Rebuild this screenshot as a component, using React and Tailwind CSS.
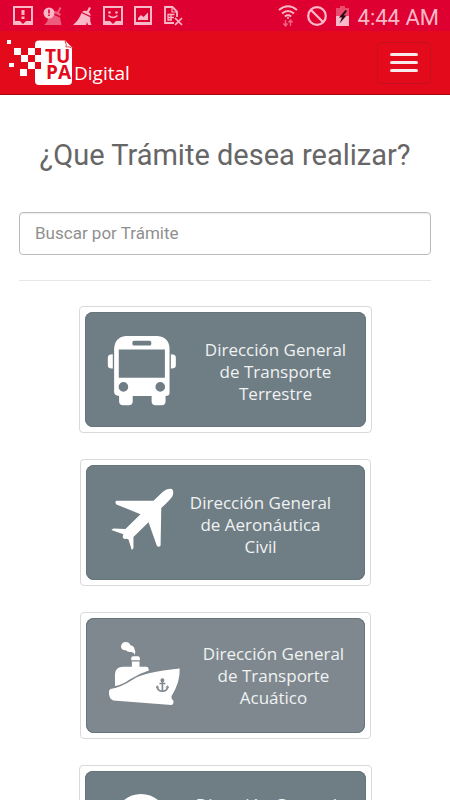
import React from 'react';

function StatusBar() {
  const icon = 'h-5 w-5 shrink-0';
  return (
    <div className="flex h-[31px] shrink-0 items-center justify-between bg-[#df0032] pl-[13px] pr-[11px] text-[#f9b8c8]">
      <div className="flex gap-[10px]">
        <svg className={icon} viewBox="0 0 20 20" fill="currentColor" aria-hidden="true">
          <path fillRule="evenodd" d="M0 0H20V19H0ZM2 2V15H7L10 18L13 15H18V2Z" />
          <path d="M8.500 4H11.500V9H8.500ZM8.500 10.500H11.500V13H8.500Z" />
        </svg>
        <svg className={icon} viewBox="0 0 20 20" fill="currentColor" aria-hidden="true">
          <g opacity=".5">
            <path d="M16.500 1L18.500 2L16 6.500L18 8L17 10L10 6.500L12 5L14.500 5.500ZM9 8L17 11.500L18.500 19H1Q5 16 5 12Z" />
          </g>
          <circle cx="6" cy="7" r="5.500" />
          <path d="M5.200 3.500H6.800V7.500H5.200ZM5.200 8.500H6.800V10H5.200Z" fill="#df0032" />
        </svg>
        <svg className={icon} viewBox="0 0 20 20" fill="currentColor" aria-hidden="true">
          <path d="M16 1L18 2L15.800 6.300Q18 7.500 17.500 10L9 6Q11 4 14 5ZM8.500 7L17.300 11.200Q16.500 15 18.500 19H15L14 16L13 19H0Q6 14 8.500 7Z" />
        </svg>
        <svg className={icon} viewBox="0 0 20 20" fill="currentColor" aria-hidden="true">
          <path fillRule="evenodd" d="M0 0H20V19H0ZM2 2V15H7L10 18L13 15H18V2Z" />
          <circle cx="6.500" cy="6.500" r="1.300" />
          <circle cx="13.500" cy="6.500" r="1.300" />
          <path d="M5.500 9.500Q10 13.500 14.500 9.500" fill="none" stroke="currentColor" strokeWidth="1.600" />
        </svg>
        <svg className={icon} viewBox="0 0 20 20" fill="currentColor" aria-hidden="true">
          <path fillRule="evenodd" d="M1 0H19V19H1ZM3 2V16H17V2Z" />
          <path d="M5 14V12L8 9L10.500 11L15 6.500V14Z" />
        </svg>
        <svg className={icon} viewBox="0 0 20 20" fill="none" stroke="currentColor" aria-hidden="true">
          <path d="M11 17H2V1H9.500L14 5.500V11" strokeWidth="1.800" />
          <path d="M9 1V6H14" strokeWidth="1.200" />
          <path d="M4.500 8.500H11.500M5 8V14H9M8 8.500V14M4.500 11.500H11" strokeWidth="1.300" />
          <path d="M12 12L19 19M19 12L12 19" strokeWidth="1.700" />
        </svg>
      </div>
      <div className="flex items-center gap-[9px]">
        <svg className="h-[22px] w-5" viewBox="0 0 20 22" fill="none" stroke="currentColor" strokeWidth="2" aria-hidden="true">
          <path d="M1 5Q10 -2.500 19 5M4 8.500Q10 3.500 16 8.500M6.800 11.500Q10 9 13.200 11.500" />
          <circle cx="10" cy="13" r="1" fill="currentColor" stroke="none" />
          <path d="M7.500 15V21M5.500 18.500L7.500 21L9.500 18.500M12.500 21V15M10.500 17.500L12.500 15L14.500 17.500" strokeWidth="1.400" opacity=".55" />
        </svg>
        <svg className={icon} viewBox="0 0 20 20" fill="none" stroke="currentColor" strokeWidth="2.300" aria-hidden="true">
          <circle cx="10" cy="10" r="8.800" />
          <path d="M4 4L16 16" />
        </svg>
        <svg className="h-5 w-[13px]" viewBox="0 0 13 20" fill="currentColor" aria-hidden="true">
          <path d="M4 0H9V2H13V11H0V2H4Z" opacity=".4" />
          <path d="M0 10H13V20H0Z" />
          <path d="M9.500 4L3 11.500H6L3.500 17.500L10.500 9.500H7.500L11 5Z" fill="#2b0710" />
        </svg>
        <span className="pt-1 font-['Roboto',sans-serif] text-[22px] leading-[27px]">4:44 AM</span>
      </div>
    </div>
  );
}

function Logo() {
  return (
    <a href="#inicio" aria-label="TUPA Digital">
      <svg className="h-[50px] w-[132px]" viewBox="0 38 132 50" role="img" aria-hidden="true">
        <path d="M39 40.500H65L72 47.500V81Q72 85 68 85H39Q35 85 35 81V44.500Q35 40.500 39 40.500Z" fill="#fff" />
        <path d="M65 41Q67 45 66 47Q69 46 71.500 48" fill="#fff" stroke="#e3424c" strokeWidth="1" />
        <g fill="#fff">
          <rect x="7" y="40" width="4" height="4" />
          <rect x="14" y="48" width="7" height="7" />
          <rect x="28" y="48" width="7" height="7" />
          <rect x="21" y="55" width="7" height="7" />
          <rect x="28" y="62" width="7" height="7" />
          <rect x="9" y="63" width="5" height="4" />
          <rect x="20" y="69" width="7" height="7" />
        </g>
        <rect x="35" y="48" width="6" height="7" fill="#e30a1b" />
        <rect x="35" y="62" width="6" height="7" fill="#e30a1b" />
        <g fill="#e30a1b" className="font-['Open_Sans',sans-serif] text-[19px] font-bold">
          <text x="45" y="63">TU</text>
          <text x="46" y="79">PA</text>
        </g>
        <text x="74" y="80" fill="#fff" className="font-['Open_Sans',sans-serif] text-[19px]">Digital</text>
      </svg>
    </a>
  );
}

function BusIcon() {
  return (
    <svg className="h-[71px] w-[70px] shrink-0" viewBox="112 106 210 214" fill="#fff" aria-hidden="true">
      <path fillRule="evenodd" d="M168 109H264Q300 112 300 150V280Q300 290 288 290V306Q288 318 276 318H258Q246 318 246 306V290H189V306Q189 318 177 318H160Q148 318 148 306V290Q133 288 133 278V150Q134 112 168 109ZM193 123Q188 123 188 128V133Q188 138 193 138H240Q245 138 245 133V128Q245 123 240 123ZM147 150V235H286V150ZM161 248A14.500 14.500 0 1 0 161 277A14.500 14.500 0 1 0 161 248ZM272 248A14.500 14.500 0 1 0 272 277A14.500 14.500 0 1 0 272 248Z" />
      <path d="M129 164V207Q114 208 114 198V174Q114 164 129 164ZM304 164V207Q319 208 319 198V174Q319 164 304 164Z" />
    </svg>
  );
}

function PlaneIcon() {
  return (
    <svg className="h-[63px] w-[63px] shrink-0" viewBox="122 118 188 188" fill="#fff" aria-hidden="true">
      <path d="M249 156L276 130Q290 118 304 121Q311 128 305 143Q300 151 272 178L270 290Q265 296 259 291L234 220L189 264V298L184 303L174 271Q168 268 166 270Q157 271 157 262L159 256L123 243L129 239L165 240L210 196L138 167Q132 160 138 156Z" />
    </svg>
  );
}

function ShipIcon() {
  return (
    <svg className="h-[65px] w-[73px] shrink-0" viewBox="114 106 220 194" fill="#fff" aria-hidden="true">
      <path d="M194 148Q193 138 182 138Q174 140 168 133Q154 134 153 121Q155 108 168 108Q178 108 181 117Q194 121 194 130Q199 138 194 148ZM184 163V156Q184 151 190 151H204Q210 151 210 157V163ZM186 167H209V183H229Q237 184 237 194Q205 204 178 222Q158 237 135 241V205Q137 183 160 183H186Z" />
      <path d="M122 250Q155 244 188 222Q222 198 330 188Q332 230 305 272Q304 279 311 284Q313 296 305 298L130 284Q116 280 117 258Q117 252 122 250Z" />
      <g fill="none" stroke="#7e888e" strokeWidth="5">
        <circle cx="278" cy="223" r="3.500" fill="#7e888e" />
        <path d="M278 226V256M269 233H287M262 243Q264 256 278 256Q292 256 294 243" />
        <path d="M260 247L262 240L268 245M288 245L294 240L296 247" strokeWidth="3" />
      </g>
    </svg>
  );
}

function RoundIcon() {
  return (
    <svg className="h-[63px] w-[63px] shrink-0" viewBox="0 0 63 63" aria-hidden="true">
      <circle cx="31" cy="27" r="24" fill="none" stroke="#fff" strokeWidth="6" />
    </svg>
  );
}

const cards = [
  { id: 'terrestre', lines: ['Dirección General', 'de Transporte', 'Terrestre'], Icon: BusIcon, outer: 'w-[293px]', inner: 'bg-[#6f7d84] gap-6 pl-[22px]', text: 'mt-1' },
  { id: 'aeronautica', lines: ['Dirección General', 'de Aeronáutica', 'Civil'], Icon: PlaneIcon, outer: 'w-[291px]', inner: 'bg-[#6f7d84] gap-3 pl-[25px]', text: 'mt-1' },
  { id: 'acuatico', lines: ['Dirección General', 'de Transporte', 'Acuático'], Icon: ShipIcon, outer: 'w-[291px]', inner: 'bg-[#7e888e] gap-[18px] pl-[22px]', text: 'mt-0.5' },
  { id: 'general', lines: ['Dirección General'], Icon: RoundIcon, outer: 'w-[293px]', inner: 'bg-[#6f7d84] gap-[19px] pl-[25px]', text: '' },
];

function Card({ id, lines, Icon, outer, inner, text }) {
  return (
    <a href={`#${id}`} className={`block max-w-full rounded border border-[#d9d9d9] bg-white p-[5px] ${outer}`}>
      <div className={`flex h-[115px] items-start rounded-lg pt-[23px] ring-1 ring-inset ring-[#66757c] ${inner}`}>
        <Icon />
        <div className={`w-[150px] shrink-0 text-center font-['Open_Sans',sans-serif] text-[17px] leading-[22px] text-[#f0f2f3] ${text}`}>
          {lines.map((line) => (
            <div key={line}>{line}</div>
          ))}
        </div>
      </div>
    </a>
  );
}

export default function App() {
  return (
    <div className="flex h-screen flex-col overflow-hidden bg-white font-['Roboto',sans-serif]">
      <StatusBar />
      <header className="flex h-16 shrink-0 items-center justify-between border-b border-[#a80a12] bg-[#e30a1b] pr-[19px]">
        <Logo />
        <button type="button" aria-label="Menú" className="flex h-[42px] w-[54px] flex-col items-center justify-center gap-[5px] rounded border border-[#c4101c]">
          <span className="h-[3px] w-7 rounded-sm bg-[#f8e9ea]" />
          <span className="h-[3px] w-7 rounded-sm bg-[#f8e9ea]" />
          <span className="h-[3px] w-7 rounded-sm bg-[#f8e9ea]" />
        </button>
      </header>
      <main className="min-h-0 flex-1 overflow-y-auto px-[19px] [scrollbar-width:none]">
        <h1 className="mt-[42px] text-center text-[29px] leading-9 text-[#666]">¿Que Trámite desea realizar?</h1>
        <input
          type="text"
          aria-label="Buscar por Trámite"
          placeholder="Buscar por Trámite"
          className="mt-[39px] block h-[43px] w-full rounded border border-[#bbb] px-[15px] pb-0.5 text-[17px] text-[#555] shadow-[inset_0_1px_1px_rgba(0,0,0,0.08)] placeholder:text-[#8f8f8f]"
        />
        <hr className="mt-[25px] border-[#e6e6e6]" />
        <div className="flex flex-col items-center gap-[26px] py-[25px]">
          {cards.map((card) => (
            <Card key={card.id} {...card} />
          ))}
        </div>
      </main>
    </div>
  );
}
